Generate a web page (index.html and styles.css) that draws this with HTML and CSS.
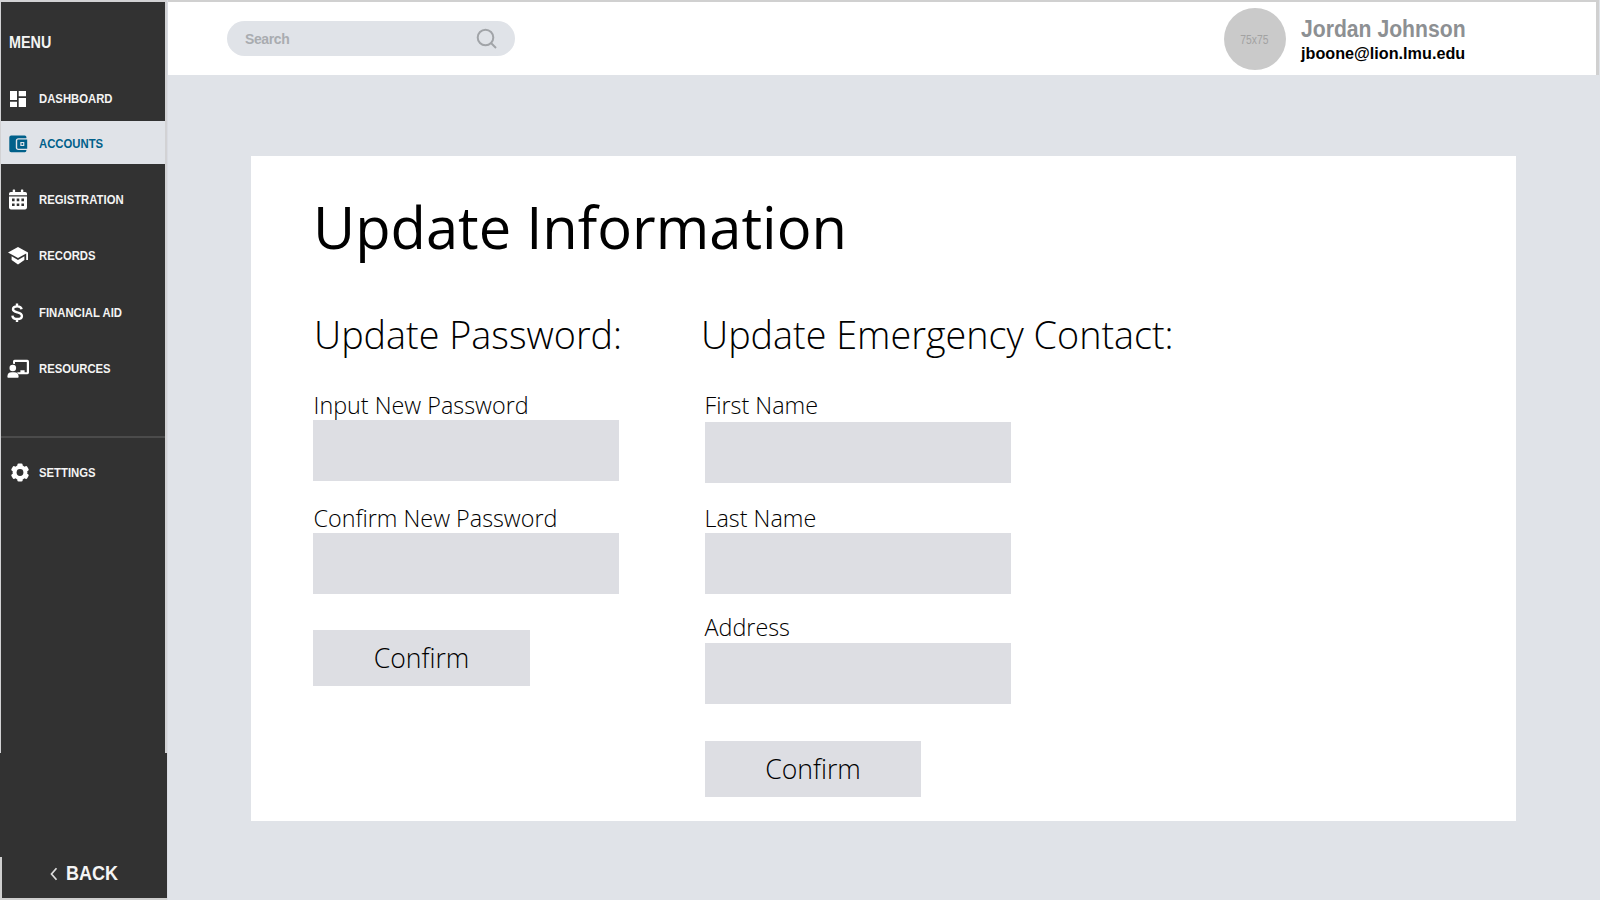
FILE: index.html
```html
<!DOCTYPE html>
<html lang="en">
<head>
<meta charset="utf-8">
<title>Update Information</title>
<link rel="stylesheet" href="styles.css">
</head>
<body>
<div class="app">
  <aside class="sidebar">
    <div class="side-main">
      <div class="menu-title"><span>MENU</span></div>
      <nav class="nav">
        <a class="item"><svg class="icon" viewBox="0 0 22 22"><path fill="#fff" d="M2 3h7v9H2zM2 13.800h7V19H2zM10.700 3h7.300v5.200h-7.300zM10.700 10h7.300v9h-7.300z"/></svg><span>DASHBOARD</span></a>
        <a class="item active"><svg class="icon" viewBox="0 0 22 22"><path fill="#00608a" d="M3.200 2.500h13.600q1.600 0 1.600 1.600v1.100H10.400q-2.600 0-2.600 2.600v6.800q0 2.400 2.600 2.400h8v.6q0 1.600-1.600 1.600H3.200q-1.900 0-1.900-1.900V4.400q0-1.900 1.900-1.900z"/><path fill="#00608a" fill-rule="evenodd" d="M10.200 6.400h9v9.400h-9q-1 0-1-1V7.400q0-1 1-1zm2.100 2.700v4h4v-4z"/><circle cx="14.300" cy="11.100" r="1" fill="#00608a"/></svg><span>ACCOUNTS</span></a>
        <a class="item"><svg class="icon" viewBox="0 0 22 22"><path fill="#fff" fill-rule="evenodd" d="M4.700 1q0-.6.6-.6h1.200q.6 0 .6.6v2h5.800V1q0-.6.6-.6h1.200q.6 0 .6.6v2h1.900q1.800 0 1.800 1.800v1.400H1V4.800Q1 3 2.800 3h1.900zM1 7.400h18v11.200q0 1.800-1.800 1.800H2.800Q1 20.400 1 18.600zM4 9.600v2.600h2.600V9.600zm4.700 0v2.600h2.600V9.600zm4.700 0v2.600H16V9.600zM4 14.500v2.600h2.600v-2.600zm4.700 0v2.600h2.600v-2.600zm4.700 0v2.600H16v-2.600z"/></svg><span>REGISTRATION</span></a>
        <a class="item"><svg class="icon" viewBox="0 0 22 22"><path fill="#fff" d="M10 2 0 7.500 10 13l8.200-4.500V15H20V7.500zM3.600 11.300V15L10 19.500l6.400-4.500v-3.700L10 15z"/></svg><span>RECORDS</span></a>
        <a class="item"><svg class="icon" viewBox="0 0 22 22"><path fill="none" stroke="#fff" stroke-width="2.400" d="M13.600 7.200C13.300 5.300 11.500 4.400 9.200 4.400 6.600 4.400 5 5.500 5 7.200c0 4.300 8.900 2 8.900 6.700 0 2-1.800 3.100-4.600 3.100-2.700 0-4.700-1-4.900-3.400M9 1.400v3M9 17v3"/></svg><span>FINANCIAL AID</span></a>
        <a class="item"><svg class="icon low" viewBox="0 0 22 22"><path fill="#fff" d="M5 2.400q0-1.600 1.600-1.600h12.800q1.600 0 1.600 1.600v11.200q0 1.600-1.600 1.600H10.600L9 13.200h3.400v-2h4.200v2h2.200V2.900H7v2.200q-1.100-.6-2-.4z"/><circle cx="4.800" cy="9" r="3.300" fill="#fff"/><path fill="#fff" d="M3.800 13.200h2.400q4.400 0 4.400 4.400v.4q0 .8-.8.800H.2q-.8 0-.8-.8v-.4q0-4.400 4.400-4.400z"/></svg><span>RESOURCES</span></a>
      </nav>
      <a class="item settings"><svg class="icon" viewBox="0 0 22 22"><g fill="#fff"><circle cx="12" cy="10.500" r="7.400"/><rect x="9.400" y="1.400" width="5.200" height="18.200" rx="1.300"/><rect x="9.400" y="1.400" width="5.200" height="18.200" rx="1.300" transform="rotate(60 12 10.500)"/><rect x="9.400" y="1.400" width="5.200" height="18.200" rx="1.300" transform="rotate(120 12 10.500)"/></g><circle cx="12" cy="10.500" r="3.400" fill="#323232"/></svg><span>SETTINGS</span></a>
    </div>
    <div class="side-fill"></div>
    <a class="back"><svg class="chevron" viewBox="0 0 8 14"><path d="M6.500 1.300 1.500 7l5 5.700" fill="none" stroke="#ddd" stroke-width="1.700"/></svg><span>BACK</span></a>
  </aside>
  <div class="content">
    <header class="topbar">
      <div class="search"><span>Search</span><svg class="lens" viewBox="0 0 22 22"><circle cx="9.500" cy="9.500" r="7.800"/><path d="m15 15 5 5"/></svg></div>
      <div class="user">
        <div class="avatar"><span>75x75</span></div>
        <div class="who"><div class="name"><span>Jordan Johnson</span></div><div class="email"><span>jboone@lion.lmu.edu</span></div></div>
      </div>
    </header>
    <main class="card">
      <h1>Update Information</h1>
      <div class="columns">
        <section class="col">
          <h2>Update Password:</h2>
          <label>Input New Password</label>
          <div class="field"></div>
          <label class="second">Confirm New Password</label>
          <div class="field"></div>
          <div class="button">Confirm</div>
        </section>
        <section class="col emergency">
          <h2>Update Emergency Contact:</h2>
          <label>First Name</label>
          <div class="field"></div>
          <label class="second">Last Name</label>
          <div class="field"></div>
          <label class="third">Address</label>
          <div class="field"></div>
          <div class="button">Confirm</div>
        </section>
      </div>
    </main>
  </div>
</div>
</body>
</html>
```
FILE: styles.css
```css
* { box-sizing: border-box; }
body { margin: 0; background: #e0e3e8; font-family: "Open Sans", "Noto Sans", sans-serif; color: #000; }
.app { display: flex; width: 1600px; height: 900px; overflow: hidden; }

.sidebar { width: 168px; flex: none; display: flex; flex-direction: column; border-right: 1px solid #d9dbe2; font-family: "Liberation Sans", Arial, sans-serif; font-weight: 700; color: #f4f4f4; }
.sidebar span { display: inline-block; transform: scaleX(0.87); transform-origin: left center; }
.side-main { height: 753px; background: #323232; border: solid #d2d2d4; border-width: 2px 2px 0 1px; }
.menu-title { height: 76px; padding: 30px 0 0 8px; font-size: 16.500px; line-height: 20px; }
.nav { height: 358px; }
.item { display: flex; align-items: center; height: 42px; margin-bottom: 14.300px; padding-left: 7px; font-size: 13px; line-height: 20px; white-space: nowrap; }
.icon { width: 22px; height: 22px; margin-right: 9px; flex: none; overflow: visible; }
.icon.low { transform: translateY(1px); }
.item:first-child { margin-bottom: 1px; }
.item.active { height: 43px; margin-bottom: 15px; padding-top: 2px; background: #e0e3e8; color: #00608a; }
.settings { border-top: 2px solid #4b4b4b; height: 71px; }
.side-fill { height: 104px; background: #323232; }
.back { height: 43px; background: #323232; border: solid #cfcfcf; border-width: 0 0 2px 2px; padding: 0 0 8px 48px; display: flex; align-items: center; font-size: 20px; }
.back span { transform: scaleX(0.9); }
.chevron { width: 8px; height: 14px; margin-right: 8px; }

.content { flex: 1; }
.topbar { display: flex; justify-content: space-between; height: 75px; background: #fff; border-top: 2px solid #d0d0d0; border-right: 3px solid #d0d0d0; margin-right: 1px; padding: 0 129px 0 59px; font-family: "Liberation Sans", Arial, sans-serif; }
.search { display: flex; align-items: center; justify-content: space-between; width: 288px; height: 35px; margin-top: 19px; padding: 0 17px 0 18px; border-radius: 18px; background: #e0e3e8; color: #a9acb0; font-weight: 700; font-size: 14px; letter-spacing: -0.400px; }
.lens { width: 22px; height: 22px; fill: none; stroke: #a1a4a8; stroke-width: 2; }
.user { display: flex; }
.avatar { width: 62px; height: 62px; margin: 6px 15px 0 0; border-radius: 50%; background: #cacaca; color: #a2a2a2; font-size: 12px; display: flex; align-items: center; justify-content: center; }
.avatar span { transform: translate(-1px, 1px) scaleX(0.860); }
.who { width: 166px; padding-top: 13px; font-weight: 700; white-space: nowrap; }
.name { font-size: 23px; line-height: 29px; color: #8d9093; }
.name span { display: inline-block; transform: scaleX(0.92); transform-origin: left center; }
.email { font-size: 16.200px; line-height: 18px; }

.card { width: 1265px; height: 665px; margin: 81px 0 0 83px; padding: 30px 0 0 62px; background: #fff; }
h1, h2 { margin: 0; white-space: nowrap; }
h1 { height: 80px; margin-bottom: 42px; font-size: 57.850px; line-height: 81px; font-weight: 400; }
.columns { display: flex; gap: 86px; }
.col { width: 306px; font-weight: 300; }
h2 { height: 50px; margin-bottom: 32px; padding-left: 1px; font-size: 37.750px; line-height: 53px; font-weight: 300; }
.emergency h2 { margin-left: -5px; }
label { display: block; height: 30px; padding-left: 0.500px; font-size: 23.350px; line-height: 31px; white-space: nowrap; }
.emergency label { padding-left: 0; margin-left: -0.500px; }
.field { height: 61px; background: #dddee3; }
.second { margin-top: 22px; }
.button { display: flex; align-items: center; justify-content: center; width: 217px; height: 56px; margin-top: 36px; background: #dddee3; font-size: 26.600px; }
.emergency .button { width: 216px; margin-top: 37px; padding-bottom: 1px; }
.emergency .second { margin-top: 20px; }
.emergency h2 + label { margin-bottom: 2px; }
.emergency .third { margin-top: 18px; margin-bottom: 1px; }
```
